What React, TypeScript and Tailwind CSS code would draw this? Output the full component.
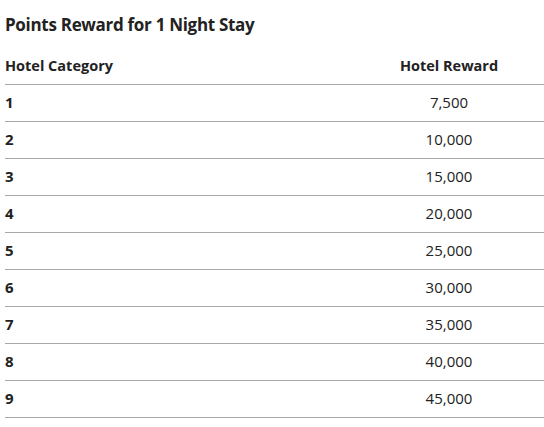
import React from "react";

const rows = [
  { cat: "1", reward: "7,500" },
  { cat: "2", reward: "10,000" },
  { cat: "3", reward: "15,000" },
  { cat: "4", reward: "20,000" },
  { cat: "5", reward: "25,000" },
  { cat: "6", reward: "30,000" },
  { cat: "7", reward: "35,000" },
  { cat: "8", reward: "40,000" },
  { cat: "9", reward: "45,000" },
];

export default function App() {
  return (
    <main className="min-h-screen bg-white pl-[5px] text-[#222] font-['Open_Sans','Liberation_Sans',sans-serif]">
      <h2 className="pt-[14px] text-[17px] leading-[22px] font-bold tracking-[-0.3px]">
        Points Reward for 1 Night Stay
      </h2>
      <table className="mt-[7px] w-full border-collapse">
        <thead>
          <tr className="border-b border-[#a8a8a8] text-[14.5px]">
            <th className="h-[41px] pt-[5px] text-left font-bold">Hotel Category</th>
            <th className="h-[41px] w-[190px] pt-[5px] text-center font-bold">Hotel Reward</th>
          </tr>
        </thead>
        <tbody className="text-[15px]">
          {rows.map((r) => (
            <tr key={r.cat} className="border-b border-[#a8a8a8]">
              <td className="h-[37px] text-left font-bold">{r.cat}</td>
              <td className="h-[37px] text-center">{r.reward}</td>
            </tr>
          ))}
        </tbody>
      </table>
    </main>
  );
}
